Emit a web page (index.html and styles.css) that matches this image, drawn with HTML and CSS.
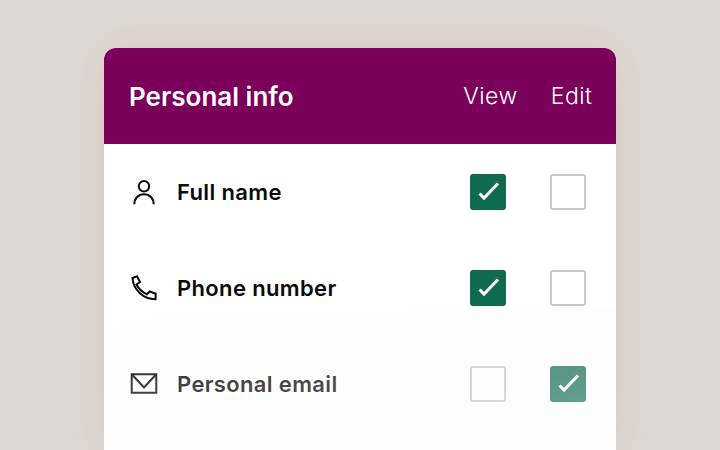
FILE: index.html
```html
<!DOCTYPE html>
<html lang="en">
<head>
  <meta charset="UTF-8">
  <title>Personal info</title>
  <link rel="stylesheet" href="styles.css">
</head>
<body>
  <div class="card">
    <div class="card-head">
      <h1>Personal info</h1>
      <span class="col-label col-view">View</span>
      <span class="col-label col-edit">Edit</span>
    </div>

    <div class="row">
      <svg class="icon" width="32" height="32" viewBox="0 0 32 32">
        <circle cx="16" cy="10.300" r="5.200"/>
        <path d="M6.300 28.300c0-6 4.200-10 9.700-10s9.700 4 9.700 10"/>
      </svg>
      <span class="row-name">Full name</span>
      <span class="box on"><svg viewBox="0 0 36 36"><path d="M9.500 19.500l4.500 4.500L28 9.500"/></svg></span>
      <span class="box"></span>
    </div>

    <div class="row">
      <svg class="icon" width="32" height="32" viewBox="0 0 32 32">
        <path d="M4.500 6L9 4.300l3 5.700-3.500 2.500C10.500 16.500 14 20 19 22.300l2.700-2.800 6 2.300-.2 5.500C15 27 5.500 18 4.500 6z"/>
      </svg>
      <span class="row-name">Phone number</span>
      <span class="box on"><svg viewBox="0 0 36 36"><path d="M9.500 19.500l4.500 4.500L28 9.500"/></svg></span>
      <span class="box"></span>
    </div>

    <div class="row">
      <svg class="icon" width="32" height="32" viewBox="0 0 32 32">
        <path d="M3.700 6.200h24.600v18.600H3.700z"/>
        <path d="M4 6.500L16 19.500 28 6.500"/>
      </svg>
      <span class="row-name">Personal email</span>
      <span class="box"></span>
      <span class="box on"><svg viewBox="0 0 36 36"><path d="M9.500 19.500l4.500 4.500L28 9.500"/></svg></span>
    </div>

    <div class="card-fade"></div>
  </div>
</body>
</html>
```
FILE: styles.css
```css
* {
  margin: 0;
  padding: 0;
  box-sizing: border-box;
}

body {
  width: 720px;
  height: 450px;
  overflow: hidden;
  padding: 48px 104px 0;
  background-color: #dfd7d1;
  font-family: 'Inter', 'Liberation Sans', sans-serif;
}

.card {
  position: relative;
  height: 402px;
  background-color: #fff;
  border-radius: 12px 12px 0 0;
  box-shadow: 0 0 48px rgba(120, 100, 90, 0.1);
  overflow: hidden;
}

.card-head {
  display: flex;
  align-items: center;
  height: 96px;
  padding: 0 23.5px 0 25px;
  background-color: #7b005b;
  color: #fff;
}

.card-head h1 {
  flex: 1;
  font-size: 26px;
  font-weight: 600;
}

.col-label {
  font-size: 23px;
  font-weight: 300;
  letter-spacing: 0.5px;
}

.col-view {
  margin-right: 33px;
}

.row {
  display: flex;
  align-items: center;
  height: 96px;
  padding: 0 30px 0 24px;
}

.icon {
  flex: none;
  margin-right: 17px;
  fill: none;
  stroke: #0b0b0b;
  stroke-width: 2;
}

.row-name {
  flex: 1;
  font-size: 22px;
  font-weight: 600;
  letter-spacing: 0.35px;
  color: #0b0b0b;
}

.box {
  flex: none;
  width: 36px;
  height: 36px;
  border: 2px solid #c8c8c8;
  border-radius: 3px;
  background-color: #fff;
}

.box + .box {
  margin-left: 44px;
}

.box.on {
  border: 0;
  background-color: #0f6a4e;
}

.box svg {
  display: block;
  fill: none;
  stroke: #fff;
  stroke-width: 3;
}

.card-fade {
  position: absolute;
  left: 0;
  right: 0;
  top: 262px;
  bottom: 0;
  background: linear-gradient(165deg, rgba(250, 250, 250, 0) 0%, rgba(250, 250, 250, 0.22) 33%, rgba(250, 250, 250, 0.33) 72%, rgba(250, 250, 250, 0.45) 100%);
}
```
